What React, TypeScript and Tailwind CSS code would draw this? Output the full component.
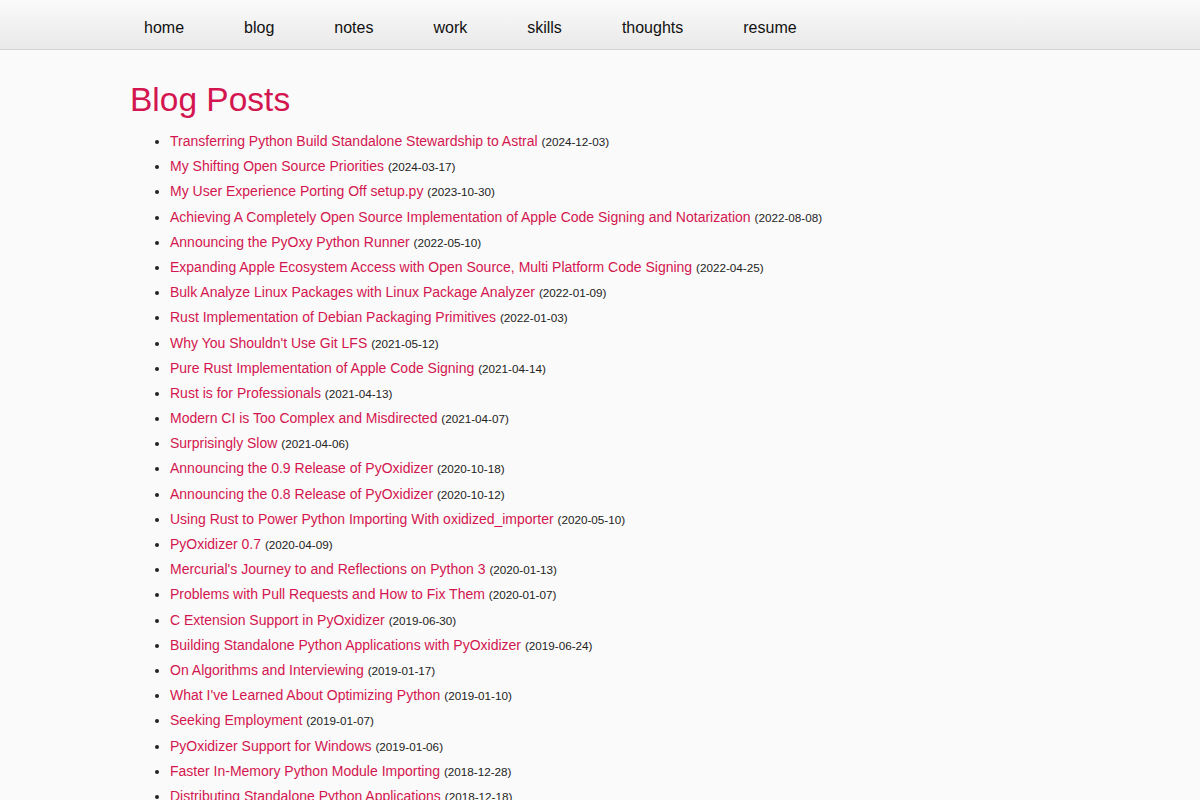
const navItems = ["home", "blog", "notes", "work", "skills", "thoughts", "resume"];

const posts: [string, string][] = [
  ["Transferring Python Build Standalone Stewardship to Astral", "2024-12-03"],
  ["My Shifting Open Source Priorities", "2024-03-17"],
  ["My User Experience Porting Off setup.py", "2023-10-30"],
  ["Achieving A Completely Open Source Implementation of Apple Code Signing and Notarization", "2022-08-08"],
  ["Announcing the PyOxy Python Runner", "2022-05-10"],
  ["Expanding Apple Ecosystem Access with Open Source, Multi Platform Code Signing", "2022-04-25"],
  ["Bulk Analyze Linux Packages with Linux Package Analyzer", "2022-01-09"],
  ["Rust Implementation of Debian Packaging Primitives", "2022-01-03"],
  ["Why You Shouldn't Use Git LFS", "2021-05-12"],
  ["Pure Rust Implementation of Apple Code Signing", "2021-04-14"],
  ["Rust is for Professionals", "2021-04-13"],
  ["Modern CI is Too Complex and Misdirected", "2021-04-07"],
  ["Surprisingly Slow", "2021-04-06"],
  ["Announcing the 0.9 Release of PyOxidizer", "2020-10-18"],
  ["Announcing the 0.8 Release of PyOxidizer", "2020-10-12"],
  ["Using Rust to Power Python Importing With oxidized_importer", "2020-05-10"],
  ["PyOxidizer 0.7", "2020-04-09"],
  ["Mercurial's Journey to and Reflections on Python 3", "2020-01-13"],
  ["Problems with Pull Requests and How to Fix Them", "2020-01-07"],
  ["C Extension Support in PyOxidizer", "2019-06-30"],
  ["Building Standalone Python Applications with PyOxidizer", "2019-06-24"],
  ["On Algorithms and Interviewing", "2019-01-17"],
  ["What I've Learned About Optimizing Python", "2019-01-10"],
  ["Seeking Employment", "2019-01-07"],
  ["PyOxidizer Support for Windows", "2019-01-06"],
  ["Faster In-Memory Python Module Importing", "2018-12-28"],
  ["Distributing Standalone Python Applications", "2018-12-18"],
  ["Python Startup Time", "2018-05-10"],
];

export default function App() {
  return (
    <div className="min-h-screen bg-[#fafafa] font-['Liberation_Sans',Arial,sans-serif] text-[#222]">
      <header className="h-[50px] border-b border-[#d4d4d4] bg-gradient-to-b from-[#fafafa] to-[#e9e9e9]">
        <nav className="flex pl-[114px]">
          {navItems.map((item) => (
            <a key={item} href="#" className="px-[30px] leading-[56px] text-base text-[#111]">
              {item}
            </a>
          ))}
        </nav>
      </header>
      <main className="pl-[130px] pt-[30px]">
        <h1 className="text-[33.5px] leading-[40px] text-[#d3164f]">Blog Posts</h1>
        <ul className="mt-[9px] list-disc pl-[40px]">
          {posts.map(([title, date]) => (
            <li key={title} className="h-[25.2px] text-[14px] leading-[25px]">
              <a href="#" className="text-[#d3164f]">{title}</a>{" "}
              <span className="text-[11.7px] text-[#222]">({date})</span>
            </li>
          ))}
        </ul>
      </main>
    </div>
  );
}
